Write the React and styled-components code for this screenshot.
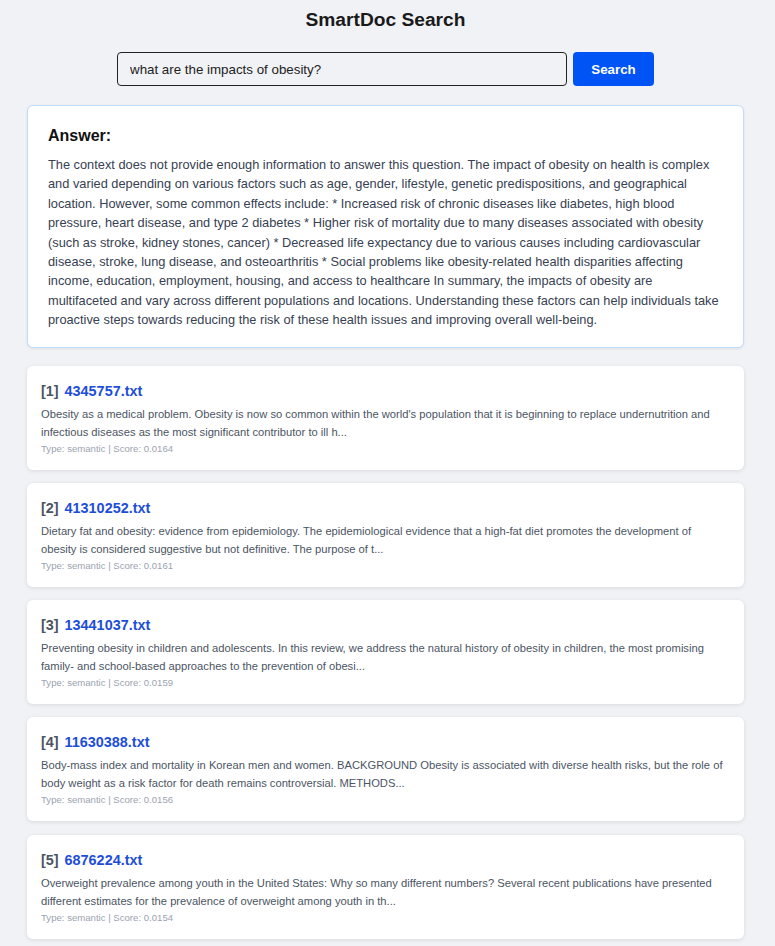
import React, { useState } from 'react';
import styled, { createGlobalStyle } from 'styled-components';

const GlobalStyle = createGlobalStyle`
  body {
    margin: 0;
    background: #f0f2f5;
    font-family: 'Liberation Sans', Arial, sans-serif;
    color: #1f2937;
  }
`;

const Page = styled.div`
  width: 717px;
  padding: 8px 0 20px 27px;
`;

const Title = styled.h1`
  margin: 0 0 20px;
  font-size: 19.2px;
  line-height: 24px;
  font-weight: bold;
  text-align: center;
  color: #1a1a1a;
`;

const SearchRow = styled.form`
  display: flex;
  justify-content: center;
  gap: 6px;
  margin-bottom: 19px;
`;

const SearchInput = styled.input`
  box-sizing: border-box;
  width: 450px;
  height: 34px;
  padding: 0 12px;
  border: 1px solid #222;
  border-radius: 4px;
  background: #f0f2f5;
  font-family: inherit;
  font-size: 13.33px;
  color: #222;
  outline: none;
`;

const SearchButton = styled.button`
  width: 81px;
  height: 34px;
  border: none;
  border-radius: 4px;
  background: #0053f5;
  color: #fff;
  font-family: inherit;
  font-size: 13.33px;
  font-weight: bold;
  cursor: pointer;
`;

const AnswerCard = styled.section`
  box-sizing: border-box;
  background: #fff;
  border: 1px solid #bfdbfe;
  border-radius: 6px;
  padding: 19px 20px 17px;
  box-shadow: 0 1px 3px rgba(0, 0, 0, 0.08);
  margin-bottom: 18px;
`;

const AnswerHeading = styled.h2`
  margin: 0 0 8px;
  font-size: 16px;
  line-height: 22px;
  font-weight: bold;
  color: #111;
`;

const AnswerText = styled.p`
  margin: 0;
  font-size: 12.8px;
  line-height: 19.4px;
  color: #374151;
`;

const ResultList = styled.div`
  display: flex;
  flex-direction: column;
  gap: 13.25px;
`;

const ResultCard = styled.article`
  background: #fff;
  border-radius: 6px;
  padding: 15px 20px 15px 14px;
  box-shadow: 0 1px 4px rgba(0, 0, 0, 0.1);
`;

const ResultTitle = styled.div`
  display: flex;
  gap: 6px;
  font-size: 14.4px;
  line-height: 20px;
  font-weight: bold;
  margin-bottom: 4px;
`;

const Index = styled.span`
  color: #4b5563;
`;

const FileLink = styled.a`
  color: #1d4ed8;
  text-decoration: none;
`;

const Snippet = styled.p`
  margin: 0;
  font-size: 11.2px;
  line-height: 18px;
  color: #4b5563;
`;

const Meta = styled.div`
  margin-top: 2px;
  font-size: 9.6px;
  line-height: 12px;
  color: #9ca3af;
`;

const answer =
  'The context does not provide enough information to answer this question. The impact of obesity on health is complex and varied depending on various factors such as age, gender, lifestyle, genetic predispositions, and geographical location. However, some common effects include: * Increased risk of chronic diseases like diabetes, high blood pressure, heart disease, and type 2 diabetes * Higher risk of mortality due to many diseases associated with obesity (such as stroke, kidney stones, cancer) * Decreased life expectancy due to various causes including cardiovascular disease, stroke, lung disease, and osteoarthritis * Social problems like obesity-related health disparities affecting income, education, employment, housing, and access to healthcare In summary, the impacts of obesity are multifaceted and vary across different populations and locations. Understanding these factors can help individuals take proactive steps towards reducing the risk of these health issues and improving overall well-being.';

const results = [
  {
    file: '4345757.txt',
    snippet:
      "Obesity as a medical problem. Obesity is now so common within the world's population that it is beginning to replace undernutrition and infectious diseases as the most significant contributor to ill h...",
    score: '0.0164',
  },
  {
    file: '41310252.txt',
    snippet:
      'Dietary fat and obesity: evidence from epidemiology. The epidemiological evidence that a high-fat diet promotes the development of obesity is considered suggestive but not definitive. The purpose of t...',
    score: '0.0161',
  },
  {
    file: '13441037.txt',
    snippet:
      'Preventing obesity in children and adolescents. In this review, we address the natural history of obesity in children, the most promising family- and school-based approaches to the prevention of obesi...',
    score: '0.0159',
  },
  {
    file: '11630388.txt',
    snippet:
      'Body-mass index and mortality in Korean men and women. BACKGROUND Obesity is associated with diverse health risks, but the role of body weight as a risk factor for death remains controversial. METHODS...',
    score: '0.0156',
  },
  {
    file: '6876224.txt',
    snippet:
      'Overweight prevalence among youth in the United States: Why so many different numbers? Several recent publications have presented different estimates for the prevalence of overweight among youth in th...',
    score: '0.0154',
  },
];

export default function App() {
  const [query, setQuery] = useState('what are the impacts of obesity?');

  return (
    <>
      <GlobalStyle />
      <Page>
        <Title>SmartDoc Search</Title>
        <SearchRow onSubmit={(e) => e.preventDefault()}>
          <SearchInput value={query} onChange={(e) => setQuery(e.target.value)} />
          <SearchButton type="submit">Search</SearchButton>
        </SearchRow>

        <AnswerCard>
          <AnswerHeading>Answer:</AnswerHeading>
          <AnswerText>{answer}</AnswerText>
        </AnswerCard>

        <ResultList>
          {results.map((r, i) => (
            <ResultCard key={r.file}>
              <ResultTitle>
                <Index>[{i + 1}]</Index>
                <FileLink href="#">{r.file}</FileLink>
              </ResultTitle>
              <Snippet>{r.snippet}</Snippet>
              <Meta>Type: semantic | Score: {r.score}</Meta>
            </ResultCard>
          ))}
        </ResultList>
      </Page>
    </>
  );
}
